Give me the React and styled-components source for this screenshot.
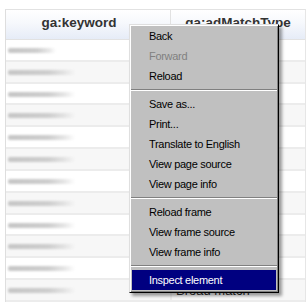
import React from "react";
import styled, { createGlobalStyle } from "styled-components";

const GlobalStyle = createGlobalStyle`
  html, body { margin: 0; padding: 0; background: #ffffff; }
  body { font-family: "Liberation Sans", Arial, sans-serif; overflow: hidden; }
`;

const Page = styled.div`
  position: relative;
  width: 307px;
  height: 302px;
  overflow: hidden;
  padding: 9px 1px 0 5px;
  box-sizing: border-box;
`;

const Table = styled.div`
  display: grid;
  grid-template-columns: 164px 1fr;
  border-left: 1px solid #dedede;
  border-top: 1px solid #e2e2e2;
  border-right: 1px solid #e6e6e6;
`;

const HeaderCell = styled.div`
  height: 30px;
  box-sizing: border-box;
  display: flex;
  align-items: center;
  justify-content: center;
  padding-right: ${(p) => p.$padRight || 0}px;
  padding-bottom: 4px;
  font-size: 13.5px;
  font-weight: bold;
  color: #333333;
  background: linear-gradient(to bottom, #ffffff 0%, #f6f8fc 45%, #e6ecf7 100%);
  border-bottom: 1px solid #e2e2e2;
  border-left: ${(p) => (p.$divider ? "1px solid #e2e2e2" : "none")};
  white-space: nowrap;
  overflow: hidden;
`;

const Cell = styled.div`
  height: 21.83px;
  box-sizing: border-box;
  display: flex;
  align-items: center;
  padding-left: ${(p) => p.$pad}px;
  background: ${(p) => (p.$alt ? "#f7f7f7" : "#ffffff")};
  border-bottom: 2px solid #ececec;
  border-left: ${(p) => (p.$divider ? "2px solid #ececec" : "none")};
  font-size: 13px;
  color: #333333;
  white-space: nowrap;
`;

const Blur = styled.span`
  display: block;
  height: 5px;
  margin-top: 1px;
  border-radius: 2px;
  background: linear-gradient(
    to right,
    #c6c6c6 0%,
    #cdcdcd 60%,
    rgba(215, 215, 215, 0.6) 85%,
    rgba(230, 230, 230, 0) 100%
  );
  filter: blur(0.9px);
`;

const Menu = styled.div`
  position: absolute;
  left: 129px;
  top: 24px;
  width: 150px;
  box-sizing: border-box;
  background: #c0c0c0;
  border-top: 1px solid #dfdfdf;
  border-left: 1px solid #dfdfdf;
  border-right: 1px solid #000000;
  border-bottom: 1px solid #000000;
  box-shadow: inset 1px 1px 0 #ffffff, inset -1px -1px 0 #808080,
    3px 3px 3px rgba(0, 0, 0, 0.38);
  padding: 1px 2px 2px 2px;
  font-family: "Liberation Sans", Tahoma, sans-serif;
  font-size: 11px;
  letter-spacing: -0.3px;
`;

const Item = styled.div`
  height: 20px;
  display: flex;
  align-items: center;
  padding-left: 17px;
  color: ${(p) => (p.$disabled ? "#808080" : p.$active ? "#ffffff" : "#000000")};
  background: ${(p) => (p.$active ? "#000080" : "transparent")};
  cursor: default;
`;

const Separator = styled.div`
  height: 8px;
  display: flex;
  flex-direction: column;
  justify-content: center;
  margin: 0 -1px;
  &::before {
    content: "";
    display: block;
    height: 1px;
    background: #808080;
  }
  &::after {
    content: "";
    display: block;
    height: 1px;
    background: #ffffff;
  }
`;

const rows = [48, 67, 67, 67, 67, 67, 67, 67, 67, 67, 67, 67];

const menu = [
  { label: "Back" },
  { label: "Forward", disabled: true },
  { label: "Reload" },
  { sep: true },
  { label: "Save as..." },
  { label: "Print..." },
  { label: "Translate to English" },
  { label: "View page source" },
  { label: "View page info" },
  { sep: true },
  { label: "Reload frame" },
  { label: "View frame source" },
  { label: "View frame info" },
  { sep: true },
  { label: "Inspect element", active: true },
];

export default function App() {
  return (
    <>
      <GlobalStyle />
      <Page>
        <Table>
          <HeaderCell $padRight={18}>ga:keyword</HeaderCell>
          <HeaderCell $divider>ga:adMatchType</HeaderCell>
          {rows.map((w, i) => (
            <React.Fragment key={i}>
              <Cell $alt={i % 2 === 1} $pad={2}>
                <Blur style={{ width: `${w}px` }} />
              </Cell>
              <Cell $alt={i % 2 === 1} $pad={4} $divider>
                {i === rows.length - 1 ? "Broad match" : ""}
              </Cell>
            </React.Fragment>
          ))}
        </Table>
        <Menu>
          {menu.map((m, i) =>
            m.sep ? (
              <Separator key={i} />
            ) : (
              <Item key={i} $disabled={m.disabled} $active={m.active}>
                {m.label}
              </Item>
            )
          )}
        </Menu>
      </Page>
    </>
  );
}
